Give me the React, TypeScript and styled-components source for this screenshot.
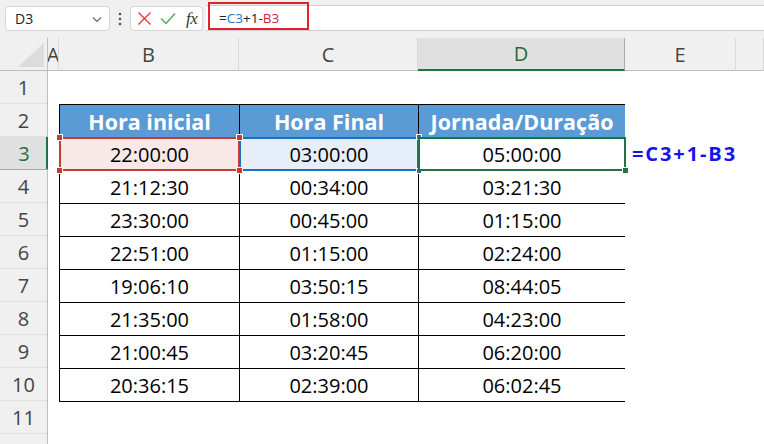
import React from 'react';
import styled, { createGlobalStyle, css } from 'styled-components';

const Global = createGlobalStyle`
  html, body { margin: 0; padding: 0; background: #f0f0f0; }
  body { font-family: "Open Sans", "Noto Sans", sans-serif; width: 764px; height: 444px; overflow: hidden; }
  * { box-sizing: border-box; }
`;

const Page = styled.div`
  width: 764px;
  height: 444px;
  display: flex;
  flex-direction: column;
  background: #f0f0f0;
  overflow: hidden;
`;

const TopBar = styled.div`
  height: 38px;
  flex: none;
  display: flex;
  align-items: flex-start;
  padding-top: 5px;
`;

const NameBox = styled.div`
  margin: 1px 0 0 5px;
  width: 105px;
  height: 25px;
  background: #fff;
  border: 1px solid #d6d6d6;
  border-radius: 4px;
  display: flex;
  align-items: center;
  justify-content: space-between;
  padding: 0 6px 0 9px;
  font-size: 14px;
  color: #222;
`;

const Dots = styled.div`
  width: 20px;
  height: 25px;
  margin-top: 1px;
  display: flex;
  align-items: center;
  justify-content: center;
`;

const ButtonBox = styled.div`
  margin: 1px 0 0 0;
  width: 73px;
  height: 25px;
  background: #fff;
  border: 1px solid #d6d6d6;
  border-radius: 4px;
  display: flex;
  align-items: center;
  gap: 8px;
  padding-left: 6px;
`;

const Fx = styled.span`
  font-family: "Liberation Serif", "DejaVu Serif", serif;
  font-style: italic;
  font-size: 17px;
  color: #333;
  margin-left: 2px;
  letter-spacing: -0.5px;
`;

const FormulaInput = styled.div`
  position: relative;
  flex: 1;
  height: 26px;
  margin-left: 3px;
  background: #fff;
  border-top: 1px solid #cfcfcf;
  border-bottom: 1px solid #cfcfcf;
  display: flex;
  align-items: center;
  padding-left: 13px;
  font-size: 13.5px;
  color: #222;
`;

const Ref = styled.span<{ $c: string }>`
  color: ${(p) => p.$c};
`;

const Callout = styled.div`
  position: absolute;
  left: 2px;
  top: -4px;
  width: 101px;
  height: 28px;
  border: 2px solid #e3202c;
`;

const Sheet = styled.div`
  flex: 1;
  display: flex;
  flex-direction: column;
  background: #fff;
`;

const HeaderRow = styled.div`
  height: 33px;
  flex: none;
  display: grid;
  grid-template-columns: 48px 11px 180px 179px 207px 111px 1fr;
  background: #f0f0f0;
`;

const Corner = styled.div`
  border-right: 1px solid #bdbdbd;
  border-bottom: 1px solid #bdbdbd;
  display: flex;
  align-items: flex-end;
  justify-content: flex-end;
  padding: 0 3px 3px 0;
`;

const ColHead = styled.div<{ $active?: boolean }>`
  display: flex;
  align-items: center;
  justify-content: center;
  overflow: hidden;
  font-size: 20px;
  color: #444;
  border-right: 1px solid #d9d9d9;
  border-bottom: 1px solid #bdbdbd;
  ${(p) =>
    p.$active &&
    css`
      background: #e0e0e0;
      color: #1f6d3c;
      border-bottom: 2px solid #217346;
      border-right-color: #ababab;
    `}
`;

const Body = styled.div`
  flex: 1;
  display: flex;
`;

const RowHeads = styled.div`
  width: 48px;
  flex: none;
  display: flex;
  flex-direction: column;
  background: #f0f0f0;
  border-right: 1px solid #bdbdbd;
`;

const RowHead = styled.div<{ $active?: boolean }>`
  height: 33px;
  flex: none;
  display: flex;
  align-items: center;
  justify-content: center;
  font-size: 20px;
  color: #444;
  border-bottom: 1px dotted #d4d4d4;
  ${(p) =>
    p.$active &&
    css`
      background: #e0e0e0;
      color: #1f6d3c;
      border-bottom: 1px solid #a8a8a8;
      box-shadow: inset -2px 0 0 #217346;
      margin-right: -1px;
    `}
`;

const Canvas = styled.div`
  flex: 1;
  display: grid;
  grid-template-columns: 11px 180px 179px 207px 111px 1fr;
  grid-template-rows: repeat(12, 33px);
`;

const Table = styled.div`
  grid-column: 2 / 5;
  grid-row: 2 / 11;
  align-self: start;
  height: 298px;
  display: grid;
  grid-template-columns: 179px 178px 206px;
  grid-auto-rows: 32px;
  gap: 1px;
  background: #000;
  border: 1px solid #000;
`;

type Sel = 'red' | 'blue' | 'green';
const selColor: Record<Sel, string> = { red: '#c83a32', blue: '#1f6fc0', green: '#217346' };
const selFill: Record<Sel, string> = { red: '#f9e8e8', blue: '#e6eff9', green: '#fff' };
const selZ: Record<Sel, number> = { red: 3, blue: 2, green: 4 };

const Cell = styled.div<{ $head?: boolean; $sel?: Sel }>`
  position: relative;
  display: flex;
  align-items: center;
  justify-content: center;
  background: #fff;
  color: #000;
  font-size: 20px;
  white-space: nowrap;
  ${(p) =>
    p.$head &&
    css`
      background: #5b9bd5;
      color: #fff;
      font-weight: 700;
      font-size: 21.5px;
    `}
  ${(p) =>
    p.$sel &&
    css`
      background: ${selFill[p.$sel]};
      z-index: ${selZ[p.$sel]};
      &::after {
        content: '';
        position: absolute;
        inset: -1px;
        border: 2px solid ${selColor[p.$sel]};
        pointer-events: none;
      }
    `}
`;

const Handle = styled.span<{ $c: string; $x: 'l' | 'r'; $y: 't' | 'b'; $s?: number }>`
  position: absolute;
  width: ${(p) => p.$s ?? 7}px;
  height: ${(p) => p.$s ?? 7}px;
  background: ${(p) => p.$c};
  border: 1px solid #fff;
  z-index: 5;
  ${(p) => (p.$x === 'l' ? 'left' : 'right')}: -4px;
  ${(p) => (p.$y === 't' ? 'top' : 'bottom')}: -4px;
`;

const Note = styled.div`
  grid-column: 5 / 7;
  grid-row: 3;
  display: flex;
  align-items: center;
  padding-left: 7px;
  font-size: 20px;
  font-weight: 700;
  letter-spacing: 1.9px;
  color: #1414f0;
  white-space: nowrap;
`;

const rows: [string, string, string][] = [
  ['22:00:00', '03:00:00', '05:00:00'],
  ['21:12:30', '00:34:00', '03:21:30'],
  ['23:30:00', '00:45:00', '01:15:00'],
  ['22:51:00', '01:15:00', '02:24:00'],
  ['19:06:10', '03:50:15', '08:44:05'],
  ['21:35:00', '01:58:00', '04:23:00'],
  ['21:00:45', '03:20:45', '06:20:00'],
  ['20:36:15', '02:39:00', '06:02:45'],
];

const cols = ['A', 'B', 'C', 'D', 'E', ''];

export default function App() {
  return (
    <Page>
      <Global />
      <TopBar>
        <NameBox>
          <span>D3</span>
          <svg width="12" height="12" viewBox="0 0 12 12">
            <path d="M2 4.5 L6 8.5 L10 4.5" fill="none" stroke="#666" strokeWidth="1.2" />
          </svg>
        </NameBox>
        <Dots>
          <svg width="4" height="14" viewBox="0 0 4 14">
            <circle cx="2" cy="2" r="1.3" fill="#555" />
            <circle cx="2" cy="7" r="1.3" fill="#555" />
            <circle cx="2" cy="12" r="1.3" fill="#555" />
          </svg>
        </Dots>
        <ButtonBox>
          <svg width="15" height="15" viewBox="0 0 15 15">
            <path d="M1.5 1.5 L13.5 13.5 M13.5 1.5 L1.5 13.5" stroke="#e0393c" strokeWidth="1.4" />
          </svg>
          <svg width="16" height="15" viewBox="0 0 16 15">
            <path d="M1 7.5 L6 12.5 L15 2.5" fill="none" stroke="#4caf50" strokeWidth="1.5" />
          </svg>
          <Fx>fx</Fx>
        </ButtonBox>
        <FormulaInput>
          <span>
            =<Ref $c="#2a74c6">C3</Ref>+1-<Ref $c="#c82a3a">B3</Ref>
          </span>
          <Callout />
        </FormulaInput>
      </TopBar>
      <Sheet>
        <HeaderRow>
          <Corner>
            <svg width="26" height="24" viewBox="0 0 26 24">
              <polygon points="26,0 26,24 0,24" fill="#dcdcdc" />
            </svg>
          </Corner>
          {cols.map((c) => (
            <ColHead key={c || 'F'} $active={c === 'D'}>
              {c}
            </ColHead>
          ))}
        </HeaderRow>
        <Body>
          <RowHeads>
            {Array.from({ length: 12 }, (_, i) => (
              <RowHead key={i} $active={i === 2}>
                {i + 1}
              </RowHead>
            ))}
          </RowHeads>
          <Canvas>
            <Table>
              <Cell $head>Hora inicial</Cell>
              <Cell $head>Hora Final</Cell>
              <Cell $head>Jornada/Duração</Cell>
              {rows.map((r, i) =>
                i === 0 ? (
                  <React.Fragment key={i}>
                    <Cell $sel="red">
                      {r[0]}
                      <Handle $c={selColor.red} $x="l" $y="t" />
                      <Handle $c={selColor.red} $x="r" $y="t" />
                      <Handle $c={selColor.red} $x="l" $y="b" />
                      <Handle $c={selColor.red} $x="r" $y="b" />
                    </Cell>
                    <Cell $sel="blue">
                      {r[1]}
                      <Handle $c={selColor.blue} $x="r" $y="t" $s={6} />
                      <Handle $c={selColor.blue} $x="r" $y="b" $s={6} />
                    </Cell>
                    <Cell $sel="green">
                      {r[2]}
                      <Handle $c={selColor.green} $x="r" $y="b" />
                    </Cell>
                  </React.Fragment>
                ) : (
                  <React.Fragment key={i}>
                    <Cell>{r[0]}</Cell>
                    <Cell>{r[1]}</Cell>
                    <Cell>{r[2]}</Cell>
                  </React.Fragment>
                )
              )}
            </Table>
            <Note>=C3+1-B3</Note>
          </Canvas>
        </Body>
      </Sheet>
    </Page>
  );
}
